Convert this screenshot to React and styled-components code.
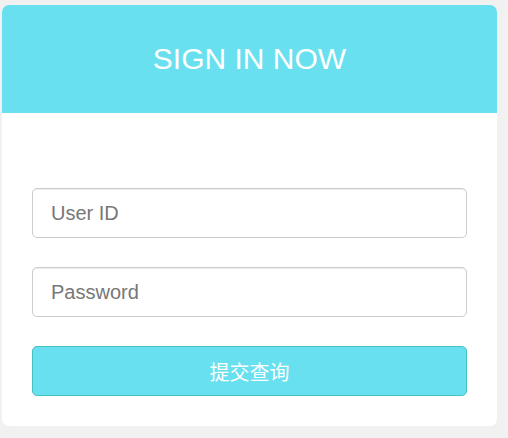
import React from 'react';
import styled, { createGlobalStyle } from 'styled-components';

const GlobalStyle = createGlobalStyle`
  html, body {
    margin: 0;
    padding: 0;
    background: #f1f1f1;
    font-family: "Liberation Sans", Arial, "Noto Sans CJK SC", sans-serif;
  }
`;

const Page = styled.div`
  padding: 5px 11px 12px 2px;
`;

const Card = styled.div`
  width: 495px;
  background: #fff;
  border-radius: 7px;
  overflow: hidden;
`;

const Header = styled.div`
  height: 108px;
  background: #68e0f0;
  display: flex;
  align-items: center;
  justify-content: center;
`;

const Title = styled.h1`
  margin: 0;
  font-size: 30px;
  font-weight: normal;
  color: #fff;
  letter-spacing: 0;
`;

const Form = styled.form`
  display: flex;
  flex-direction: column;
  gap: 29px;
  padding: 75px 30px 30px;
`;

const Field = styled.input`
  box-sizing: border-box;
  height: 50px;
  width: 100%;
  padding: 0 18px;
  border: 1px solid #cccccc;
  border-radius: 5px;
  box-shadow: inset 0 1px 1px rgba(0, 0, 0, 0.075);
  font-family: "Liberation Sans", Arial, sans-serif;
  font-size: 20px;
  color: #555;
  outline: none;

  &::placeholder {
    color: #777;
  }
`;

const Submit = styled.button`
  box-sizing: border-box;
  height: 50px;
  width: 100%;
  background: #68e0f0;
  border: 1px solid #46c3c1;
  border-radius: 5px;
  color: #fff;
  font-family: "Liberation Sans", Arial, "Noto Sans CJK SC", sans-serif;
  font-size: 20px;
  cursor: pointer;
`;

export default function App() {
  return (
    <>
      <GlobalStyle />
      <Page>
        <Card>
          <Header>
            <Title>SIGN IN NOW</Title>
          </Header>
          <Form onSubmit={(e) => e.preventDefault()}>
            <Field type="text" placeholder="User ID" />
            <Field type="password" placeholder="Password" />
            <Submit type="submit">提交查询</Submit>
          </Form>
        </Card>
      </Page>
    </>
  );
}
